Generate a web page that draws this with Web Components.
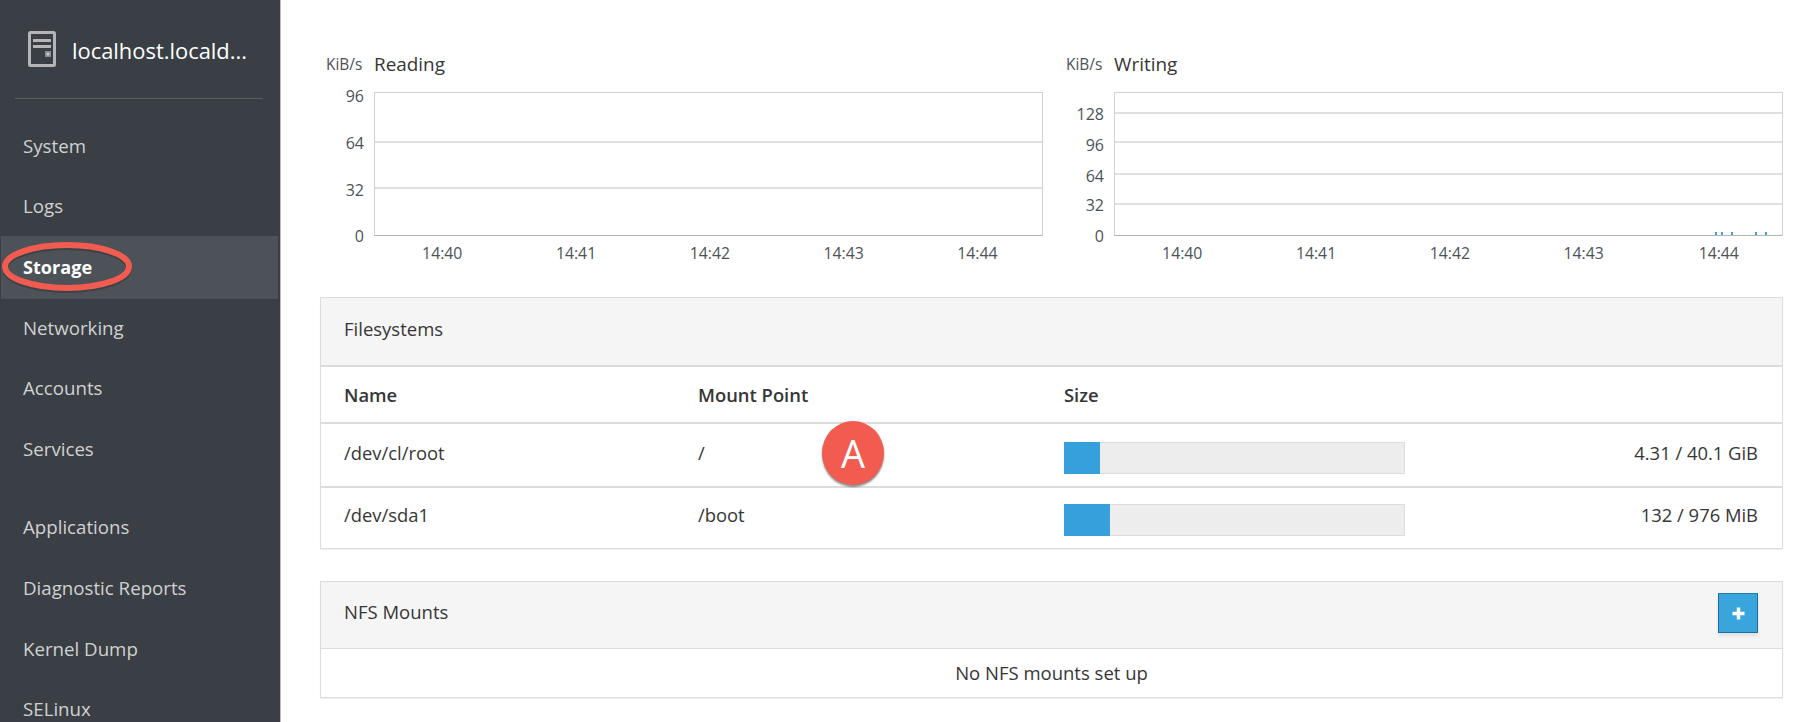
<!DOCTYPE html>
<html lang="en"><head><meta charset="utf-8"><title>Storage</title>
<style>
html,body{margin:0;padding:0;height:100%;overflow:hidden;background:#fff;font-family:"Open Sans",sans-serif;color:#363636}
</style></head><body>
<cockpit-app>
  <side-nav slot="nav" host-name="localhost.locald...">
    <nav-item>System</nav-item><nav-item>Logs</nav-item><nav-item active>Storage</nav-item><nav-item>Networking</nav-item><nav-item>Accounts</nav-item><nav-item>Services</nav-item>
    <nav-item class="s" style="margin-top:18px">Applications</nav-item><nav-item>Diagnostic Reports</nav-item><nav-item>Kernel Dump</nav-item><nav-item>SELinux</nav-item>
  </side-nav>
  <io-chart title-text="Reading" ticks="96:0:3,64:34.4:35.5,32:66.6:68,0:100:100" xs="10.2,30.2,50.2,70.2,90.2"></io-chart>
  <io-chart title-text="Writing" ticks="128:14:15,96:34.5:36.5,64:57:58,32:78.5:78.5,0:100:100" xs="10.2,30.2,50.2,70.2,90.4" dots="89.9,90.8,92.4,96,97.5"></io-chart>
  <fs-panel slot="panels" heading="Filesystems">
    <fs-table></fs-table>
  </fs-panel>
  <fs-panel slot="panels" heading="NFS Mounts" action>
    <div style="text-align:center;font-size:18.5px;line-height:47px;height:48px">No NFS mounts set up</div>
  </fs-panel>
  <call-out slot="panels"></call-out>
</cockpit-app>
<script>
customElements.define('cockpit-app',class extends HTMLElement{
  constructor(){super();this.attachShadow({mode:'open'}).innerHTML=`<style>
:host{display:flex;height:722px;overflow:hidden}
main{flex:1;min-width:0;padding:51px 26px 0 39px;box-sizing:border-box;position:relative}
.charts{display:flex;gap:17px;margin-bottom:17px}
.panels{display:flex;flex-direction:column;gap:32px;position:relative}
</style><slot name="nav"></slot><main><div class="charts"><slot></slot></div><div class="panels"><slot name="panels"></slot></div></main>`}
});

customElements.define('side-nav',class extends HTMLElement{
  constructor(){super();const r=this.attachShadow({mode:'open'});
  r.innerHTML=`<style>
  :host{display:block;width:281px;flex:none;height:722px;box-sizing:border-box;background:#393f44;border-right:1px solid #b9b9b9;overflow:hidden;position:relative}
  header{height:99px;box-sizing:border-box;margin:0 17px 0 15px;border-bottom:1px solid #5a5f63;display:flex;align-items:center;padding:0 0 0 13px;gap:16px;color:#fff;font-size:21.9px}
  svg.s{flex:none;display:block}
  span{position:relative;top:1px}
  .list{padding-top:16px}
  </style>
  <header><svg class="s" width="28" height="36" viewBox="0 0 28 36"><rect x="1.5" y="1.5" width="25" height="33" rx="1" fill="none" stroke="#b3b5b6" stroke-width="3"/><rect x="5" y="8" width="18" height="3" fill="#b3b5b6"/><rect x="5" y="14" width="18" height="3" fill="#b3b5b6"/><rect x="17" y="20" width="6" height="6" fill="#8a8d90"/><circle cx="20" cy="23" r="1.6" fill="#c8c9ca"/></svg><span id="h"></span></header>
  <div class="list"><slot></slot></div>`}
  connectedCallback(){this.shadowRoot.getElementById('h').textContent=this.getAttribute('host-name')}
});

customElements.define('nav-item',class extends HTMLElement{
  constructor(){super();this.attachShadow({mode:'open'}).innerHTML=`<style>
  :host{display:flex;align-items:center;height:60.6px;padding-left:23px;box-sizing:border-box;color:#d1d1d1;font-size:18.7px;position:relative}
  :host([active]){background:#4d5258;color:#fff;font-weight:700;font-size:18.1px;margin-left:1px;margin-right:2px;padding-left:22px;height:62.6px;margin-bottom:-2px}
  svg{position:absolute;left:-1px;top:5px;overflow:visible;display:none}
  :host([active]) svg{display:block}
  </style><slot></slot><svg width="134" height="52" viewBox="0 0 134 52"><ellipse cx="67" cy="27.5" rx="62" ry="21.5" fill="none" stroke="#2f3438" stroke-opacity=".55" stroke-width="6"/><ellipse cx="67" cy="25.5" rx="62" ry="21.5" fill="none" stroke="#f15b50" stroke-width="6"/></svg>`}
});

customElements.define('io-chart',class extends HTMLElement{
  constructor(){super();this.attachShadow({mode:'open'})}
  connectedCallback(){
    const t=this.getAttribute('ticks').split(',').map(s=>s.split(':'));
    const xs=this.getAttribute('xs').split(',');
    const dots=(this.getAttribute('dots')||'').split(',').filter(Boolean);
    this.shadowRoot.innerHTML=`<style>
    :host{display:grid;flex:1;min-width:0;grid-template-columns:54px 1fr;grid-template-rows:24px 161px 44px}
    .u{font-size:15.4px;color:#4d5258;padding-left:6px;line-height:24px;padding-top:2px;white-space:nowrap;box-sizing:border-box}
    .t{font-size:18.9px;line-height:24px;color:#363636;position:relative;top:1px}
    .head{grid-column:1/3;display:grid;grid-template-columns:54px 1fr;height:24px}
    .y{position:relative;margin-top:17px}
    .plot{position:relative;margin-top:17px;border:1px solid #d2d2d2;border-bottom-color:#b4b4b4;height:144px;box-sizing:border-box}
    .y span{position:absolute;right:10px;transform:translateY(-50%);font-size:16px;color:#4d5258;line-height:18px}
    .g{position:absolute;left:0;right:0;height:2px;background:#e0e0e0;margin-top:-1px}
    .d{position:absolute;bottom:0;width:2px;height:3px;background:#39a5dc}
    .x{grid-column:2;position:relative}
    .x span{position:absolute;top:8px;transform:translateX(-50%);font-size:15.8px;color:#4d5258;line-height:18px}
    </style>
    <div class="head"><div class="u">KiB/s</div><div class="t">${this.getAttribute('title-text')}</div></div>
    <div class="y">${t.map(([l,p,q])=>`<span style="top:${q}%">${l}</span>`).join('')}</div>
    <div class="plot">${t.filter(([l,p])=>p!=='0'&&p!=='100').map(([l,p])=>`<div class="g" style="top:${p}%"></div>`).join('')}${dots.map(d=>`<div class="d" style="left:${d}%"></div>`).join('')}</div>
    <div class="x">${xs.map((p,i)=>`<span style="left:${p}%">14:4${i}</span>`).join('')}</div>`;
  }
});

customElements.define('fs-panel',class extends HTMLElement{
  constructor(){super();this.attachShadow({mode:'open'})}
  connectedCallback(){
    const a=this.hasAttribute('action');
    this.shadowRoot.innerHTML=`<style>
    :host{display:block;border:1px solid #dcdcdc;background:#fff;box-shadow:0 1px 1px rgba(0,0,0,.05)}
    .h{height:${a?67:69}px;box-sizing:border-box;background:#f5f5f5;border-bottom:${a?1:2}px solid #dcdcdc;display:flex;align-items:center;justify-content:space-between;padding:0 24px 0 23px;font-size:18.5px}
    span{position:relative;top:${a?-4:-3}px}
    button{width:40px;height:40px;padding:0;border:1px solid #1d6f9e;border-top-color:#1f7db0;background:#39a5dc;display:flex;align-items:center;justify-content:center;margin-top:-4px;box-shadow:0 3px 3px rgba(0,0,0,.08)}
    </style><div class="h"><span>${this.getAttribute('heading')}</span>${a?`<button aria-label="Add"><svg width="15" height="15" viewBox="0 0 15 15"><path d="M7.5 1.5v12M1.5 7.5h12" stroke="#fff" stroke-width="3.4"/></svg></button>`:''}</div><slot></slot>`;
  }
});

customElements.define('fs-table',class extends HTMLElement{
  constructor(){super();this.attachShadow({mode:'open'}).innerHTML=`<style>
  :host{display:block;font-size:18.4px}
  .r{display:grid;grid-template-columns:354px 366px 341px 1fr;padding:0 24px 0 23px;align-items:center;box-sizing:border-box;border-bottom:2px solid #dcdcdc}
  .r:last-child{border-bottom:0}
  .hd{height:57px;font-weight:600;color:#363636}
  .row{height:64px}.row:last-child{height:60px}
  .row:last-child usage-bar{margin-top:4px}
  .v{text-align:right}
  .txt{margin-top:-6px}
  .row:last-child .txt{margin-top:-8px}
  </style>
  <div class="r hd"><span>Name</span><span>Mount Point</span><span>Size</span><span></span></div>
  <div class="r row"><span class="txt">/dev/cl/root</span><span class="txt">/</span><usage-bar pct="10.7"></usage-bar><span class="v txt">4.31 / 40.1 GiB</span></div>
  <div class="r row"><span class="txt">/dev/sda1</span><span class="txt">/boot</span><usage-bar pct="13.6"></usage-bar><span class="v txt">132 / 976 MiB</span></div>`}
});

customElements.define('usage-bar',class extends HTMLElement{
  constructor(){super();this.attachShadow({mode:'open'})}
  connectedCallback(){this.shadowRoot.innerHTML=`<style>
  :host{display:block;height:32px;background:#ededed;border:1px solid #dcdcdc;box-sizing:border-box;margin-top:6px}
  div{height:32px;margin:-1px 0 0 -1px;background:#35a0db}
  </style><div style="width:${this.getAttribute('pct')}%"></div>`}
});

customElements.define('call-out',class extends HTMLElement{
  constructor(){super();this.attachShadow({mode:'open'}).innerHTML=`<style>
  :host{position:absolute;left:502px;top:124px;width:62px;height:64px;border-radius:50%;background:#f15b50;color:#fff;font-size:38px;display:flex;align-items:center;justify-content:center;box-shadow:0 2px 2px rgba(0,0,0,.45);line-height:1;font-family:"Open Sans",sans-serif}
  </style>A`}
});
</script>
</body></html>
